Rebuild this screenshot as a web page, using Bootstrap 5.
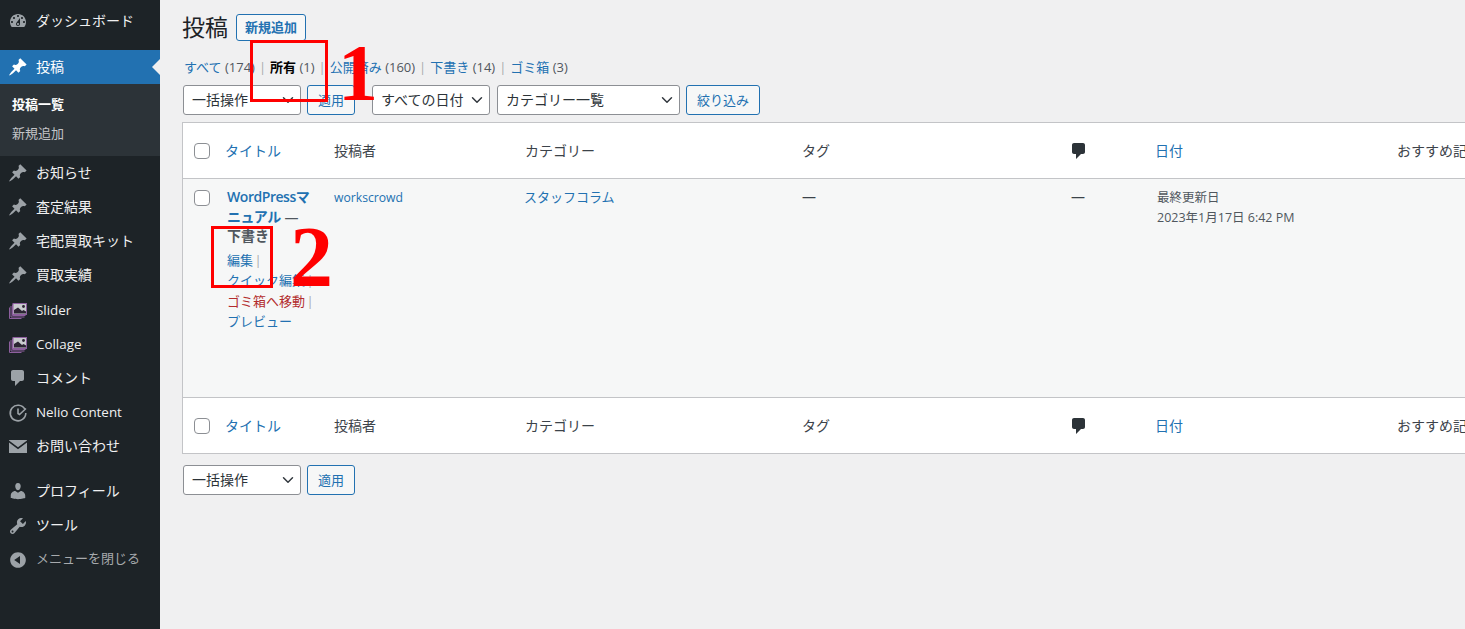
<!DOCTYPE html>
<html lang="ja">
<head>
<meta charset="utf-8">
<title>投稿</title>
<link href="https://cdn.jsdelivr.net/npm/bootstrap@5.3.0/dist/css/bootstrap.min.css" rel="stylesheet">
<style>
html,body{height:100%;overflow:hidden}
body{font-family:"Open Sans","Noto Sans CJK JP",sans-serif;font-size:13px;background:#f0f0f1;color:#3c434a;position:relative}
a{text-decoration:none;color:#2271b1}
.wp-shell{height:629px;overflow:hidden}
.wp-side{width:160px;flex:0 0 160px;background:#1d2327;padding-top:4px}
.wp-item{height:34px;color:#f0f0f1;font-size:14px;padding:0 0 2px 8px;gap:8px;position:relative}
.wp-item:hover{color:#72aee6}
.wp-item svg{width:20px;height:20px;flex:0 0 20px;fill:#9ca2a7;margin-top:2px}
.wp-item.tall{height:34.4px}
.wp-item.latin{font-size:13.4px;padding-bottom:1px}
.wp-item.latin.tall{padding-bottom:0}
.wp-sep{margin-top:12px}
.wp-sep2{margin-top:11px}
.wp-item.current{background:#2271b1;color:#fff}
.wp-item.current svg{fill:#fff}
.wp-item.current::after{content:"";position:absolute;right:0;top:9px;border:8px solid transparent;border-right-color:#f0f0f1;border-left:0}
.wp-sub{background:#2c3338;height:72px;padding-top:6px}
.wp-sub a{display:block;height:29px;line-height:29px;padding-left:12px;font-size:13px;color:#c3c4c7}
.wp-sub a.on{color:#fff;font-weight:700}
.wp-item.dim{color:#a7aaad;font-size:13px}
.wp-main{flex:1 1 auto;min-width:0;padding-left:22px;overflow:hidden}
.wp-head{height:41px;padding-top:14px;gap:8px;padding-left:1px}
.wp-title{font-size:23px;font-weight:400;line-height:26px;margin:0;color:#1d2327;margin-left:-1px}
.wp-add{border:1px solid #2271b1;color:#2271b1;background:#f6f7f7;font-size:13px;font-weight:600;border-radius:3px;padding:0 8px;height:27px;line-height:25px;width:70px;white-space:nowrap}
.wp-views{height:44px;padding:17px 0 0 2px;line-height:18px;white-space:nowrap;color:#50575e;font-size:13px}
.wp-views b{color:#000}
.wp-views i{font-style:normal;color:#a7aaad;margin:0 4px}
.wp-views em{font-style:normal;color:#50575e}
.wp-bar{height:37px;gap:6px;padding-left:1px}
.wp-sel.form-select{height:30px;font-size:14px;color:#2c3338;border:1px solid #8c8f94;border-radius:3px;padding:0 24px 0 8px;line-height:28px;background-position:right 4px center;background-color:#fff;flex:0 0 auto}
.sel-a{width:118px}.sel-b{width:118px;margin-left:11px}.sel-c{width:183px;margin-left:1px}
.wp-btn{height:30px;border:1px solid #2271b1;color:#2271b1;background:#f6f7f7;border-radius:3px;font-size:13px;padding:0;line-height:28px;text-align:center;flex:0 0 auto}
.wp-btn:hover{border-color:#135e96;color:#135e96;background:#f0f0f1}
.btn-apply{width:48px}.btn-filter{width:74px}
.wp-table.table{table-layout:fixed;width:1420px;margin:0;border:1px solid #c3c4c7;border-collapse:separate;border-spacing:0;font-size:14px;--bs-table-bg:transparent}
.wp-table th,.wp-table td{border:0;font-weight:400;padding:0 10px;vertical-align:middle;color:#3c434a;box-shadow:none}
.wp-table thead th{height:56px;background:#fff;border-bottom:1px solid #c3c4c7}
.wp-table tfoot th{height:56px;background:#fff;border-top:1px solid #c3c4c7}
.wp-table tbody td{height:218px;background:#f6f7f7;vertical-align:top;padding-top:8px;line-height:19.5px}
.wp-table th.sort{padding-left:8px}
.c-cb{width:34px}.c-title{width:107px}.c-auth{width:191px}.c-cat{width:277px}.c-tag{width:269px}.c-com{width:86px}.c-date{width:240px}.c-feat{width:216px}
.wp-table th.c-cb{padding:0 0 0 11px}
.wp-table tbody td.c-cb{padding:9px 0 0 11px}
.wp-check.form-check-input{width:16px;height:16px;margin:0;border:1px solid #8c8f94;border-radius:4px;display:block;float:none;background-color:#fff}
td.c-cb .wp-check{margin-top:2px}
.wp-post{font-weight:600;color:#2271b1;letter-spacing:-.45px}
.wp-state{font-weight:600;color:#50575e}
.wp-acts{margin-top:4px;font-size:13px;line-height:20.5px;white-space:nowrap}
.wp-acts span{display:block;color:#a7aaad;word-spacing:-2px}
.wp-acts a.del{color:#b32d2e}
.wp-small{font-size:12.2px;color:#2271b1}
.wp-catlink{font-size:13px;margin-left:-1px}
.wp-table tbody td.wp-date{font-size:12.5px;line-height:20px;color:#50575e;padding-top:9px}
.wp-cicon{width:20px;height:20px;fill:#2c3338;display:block;margin-left:-2px}
.wp-bottom{margin-top:11px;gap:6px;padding-left:1px}
.wp-mark{position:absolute;border:3px solid #f00;pointer-events:none}
.wp-mark1{left:250px;top:40px;width:78px;height:62px}
.wp-mark2{left:211px;top:226px;width:62px;height:62px}
.wp-num{position:absolute;color:#f00;font-family:"Liberation Serif",serif;font-weight:700;pointer-events:none;line-height:1}
.wp-num1{left:338px;top:33px;font-size:80px}
.wp-num2{left:290px;top:214px;font-size:86px}
</style>
</head>
<body>
<div class="d-flex wp-shell">
  <nav class="wp-side d-flex flex-column">
    <a class="wp-item d-flex align-items-center" href="#"><svg viewBox="0 0 20 20"><path fill-rule="evenodd" d="M3.76 16h12.48c1.1-1.37 1.76-3.11 1.76-5 0-4.42-3.58-8-8-8s-8 3.58-8 8c0 1.89.66 3.63 1.76 5zM10 4c.55 0 1 .45 1 1s-.45 1-1 1-1-.45-1-1 .45-1 1-1zM6 6c.55 0 1 .45 1 1s-.45 1-1 1-1-.45-1-1 .45-1 1-1zm8 0c.55 0 1 .45 1 1s-.45 1-1 1-1-.45-1-1 .45-1 1-1zm-5.37 5.55L12 7v6c0 1.1-.9 2-2 2s-2-.9-2-2c0-.57.24-1.08.63-1.45zM4 10c.55 0 1 .45 1 1s-.45 1-1 1-1-.45-1-1 .45-1 1-1zm12 0c.55 0 1 .45 1 1s-.45 1-1 1-1-.45-1-1 .45-1 1-1zm-5 3c0-.55-.45-1-1-1s-1 .45-1 1 .45 1 1 1 1-.45 1-1z"/></svg>ダッシュボード</a>
    <a class="wp-item current wp-sep d-flex align-items-center" href="#"><svg viewBox="0 0 20 20"><path d="M10.44 3.02l1.82-1.82 6.36 6.35-1.83 1.82c-1.05-.68-2.48-.57-3.41.36l-.75.75c-.92.93-1.04 2.35-.35 3.41l-1.83 1.82-2.41-2.41-2.8 2.79c-.42.42-3.38 2.71-3.8 2.29s1.86-3.39 2.28-3.81l2.79-2.79L4.1 9.36l1.83-1.82c1.05.69 2.48.57 3.4-.36l.75-.75c.93-.92 1.05-2.35.36-3.41z"/></svg>投稿</a>
    <div class="wp-sub"><a class="on" href="#">投稿一覧</a><a href="#">新規追加</a></div>
    <a class="wp-item d-flex align-items-center" href="#"><svg viewBox="0 0 20 20"><path d="M10.44 3.02l1.82-1.82 6.36 6.35-1.83 1.82c-1.05-.68-2.48-.57-3.41.36l-.75.75c-.92.93-1.04 2.35-.35 3.41l-1.83 1.82-2.41-2.41-2.8 2.79c-.42.42-3.38 2.71-3.8 2.29s1.86-3.39 2.28-3.81l2.79-2.79L4.1 9.36l1.83-1.82c1.05.69 2.48.57 3.4-.36l.75-.75c.93-.92 1.05-2.35.36-3.41z"/></svg>お知らせ</a>
    <a class="wp-item d-flex align-items-center" href="#"><svg viewBox="0 0 20 20"><path d="M10.44 3.02l1.82-1.82 6.36 6.35-1.83 1.82c-1.05-.68-2.48-.57-3.41.36l-.75.75c-.92.93-1.04 2.35-.35 3.41l-1.83 1.82-2.41-2.41-2.8 2.79c-.42.42-3.38 2.71-3.8 2.29s1.86-3.39 2.28-3.81l2.79-2.79L4.1 9.36l1.83-1.82c1.05.69 2.48.57 3.4-.36l.75-.75c.93-.92 1.05-2.35.36-3.41z"/></svg>査定結果</a>
    <a class="wp-item d-flex align-items-center" href="#"><svg viewBox="0 0 20 20"><path d="M10.44 3.02l1.82-1.82 6.36 6.35-1.83 1.82c-1.05-.68-2.48-.57-3.41.36l-.75.75c-.92.93-1.04 2.35-.35 3.41l-1.83 1.82-2.41-2.41-2.8 2.79c-.42.42-3.38 2.71-3.8 2.29s1.86-3.39 2.28-3.81l2.79-2.79L4.1 9.36l1.83-1.82c1.05.69 2.48.57 3.4-.36l.75-.75c.93-.92 1.05-2.35.36-3.41z"/></svg>宅配買取キット</a>
    <a class="wp-item tall d-flex align-items-center" href="#"><svg viewBox="0 0 20 20"><path d="M10.44 3.02l1.82-1.82 6.36 6.35-1.83 1.82c-1.05-.68-2.48-.57-3.41.36l-.75.75c-.92.93-1.04 2.35-.35 3.41l-1.83 1.82-2.41-2.41-2.8 2.79c-.42.42-3.38 2.71-3.8 2.29s1.86-3.39 2.28-3.81l2.79-2.79L4.1 9.36l1.83-1.82c1.05.69 2.48.57 3.4-.36l.75-.75c.93-.92 1.05-2.35.36-3.41z"/></svg>買取実績</a>
    <a class="wp-item tall latin d-flex align-items-center" href="#"><svg viewBox="0 0 20 20"><path d="M1.5 6.5v11h12M3 5v11h13.5M4.5 3.5v11h13" fill="none" stroke="#8d5f9e" stroke-width="1"/><rect x="5" y="2.5" width="13.5" height="11" fill="#c9cbce" stroke="#8d5f9e"/><path d="M6 12.5l0-3.5 4-2.5 4 3.5 1.5-1 2.5 1.5v2z" fill="#2c2533"/><circle cx="15.5" cy="5.5" r="1.4" fill="#2c2533"/></svg><span>Slider</span></a>
    <a class="wp-item tall latin d-flex align-items-center" href="#"><svg viewBox="0 0 20 20"><path d="M1.5 6.5v11h12M3 5v11h13.5M4.5 3.5v11h13" fill="none" stroke="#8d5f9e" stroke-width="1"/><rect x="5" y="2.5" width="13.5" height="11" fill="#c9cbce" stroke="#8d5f9e"/><path d="M6 12.5l0-3.5 4-2.5 4 3.5 1.5-1 2.5 1.5v2z" fill="#2c2533"/><circle cx="15.5" cy="5.5" r="1.4" fill="#2c2533"/></svg><span>Collage</span></a>
    <a class="wp-item d-flex align-items-center" href="#"><svg viewBox="0 0 20 20"><path d="M5 2h9c1.1 0 2 .9 2 2v7c0 1.1-.9 2-2 2h-2l-5 5v-5H5c-1.1 0-2-.9-2-2V4c0-1.1.9-2 2-2z"/></svg>コメント</a>
    <a class="wp-item latin d-flex align-items-center" href="#"><svg viewBox="0 0 20 20"><path d="M16.8 6.2A7.8 7.8 0 1 0 17.8 10" fill="none" stroke="#9ca2a7" stroke-width="1.6"/><path d="M10 5.5v5l1.5 1L18 5.5" fill="none" stroke="#9ca2a7" stroke-width="1.6"/></svg><span>Nelio Content</span></a>
    <a class="wp-item d-flex align-items-center" href="#"><svg viewBox="0 0 20 20"><path d="M1 4h18v.6l-9 6.6-9-6.6zM1 6.6l9 6.6 9-6.6V17H1z"/></svg>お問い合わせ</a>
    <a class="wp-item tall wp-sep2 d-flex align-items-center" href="#"><svg viewBox="0 0 20 20"><path d="M10 9.25c-2.27 0-2.73-3.44-2.73-3.44C7 4.02 7.82 2 9.97 2c2.16 0 2.98 2.02 2.71 3.81 0 0-.41 3.44-2.68 3.44zm0 2.57L12.72 10c2.39 0 4.52 2.33 4.52 4.53v2.49s-3.65 1.13-7.24 1.13c-3.65 0-7.24-1.13-7.24-1.13v-2.49c0-2.25 1.94-4.48 4.47-4.48z"/></svg>プロフィール</a>
    <a class="wp-item tall d-flex align-items-center" href="#"><svg viewBox="0 0 20 20"><path fill-rule="evenodd" d="M16.68 9.77c-1.34 1.34-3.3 1.67-4.95.99l-5.41 6.52c-.99.99-2.59.99-3.58 0s-.99-2.59 0-3.57l6.52-5.42c-.68-1.65-.35-3.61.99-4.95 1.28-1.28 3.12-1.62 4.72-1.06l-2.89 2.89 2.82 2.82 2.86-2.87c.53 1.58.18 3.39-1.08 4.65zM3.81 16.21c.4.39 1.04.39 1.43 0 .4-.4.4-1.04 0-1.43-.39-.4-1.03-.4-1.43 0-.39.39-.39 1.03 0 1.43z"/></svg>ツール</a>
    <a class="wp-item dim d-flex align-items-center" href="#"><svg viewBox="0 0 20 20"><path fill-rule="evenodd" d="M10 2.16c4.33 0 7.84 3.51 7.84 7.84s-3.51 7.84-7.84 7.84S2.16 14.33 2.16 10 5.71 2.16 10 2.16zm2 11.72V6.12L6.18 9.97z"/></svg>メニューを閉じる</a>
  </nav>
  <main class="wp-main">
    <div class="wp-head d-flex align-items-start">
      <h1 class="wp-title">投稿</h1>
      <a class="wp-add text-center" href="#">新規追加</a>
    </div>
    <div class="wp-views">
      <a href="#">すべて <em>(174)</em></a><i>|</i><a href="#"><b>所有</b> <em>(1)</em></a><i>|</i><a href="#">公開済み <em>(160)</em></a><i>|</i><a href="#">下書き <em>(14)</em></a><i>|</i><a href="#">ゴミ箱 <em>(3)</em></a>
    </div>
    <div class="wp-bar d-flex align-items-start">
      <select class="form-select wp-sel sel-a"><option>一括操作</option></select>
      <button class="btn wp-btn btn-apply" type="button">適用</button>
      <select class="form-select wp-sel sel-b"><option>すべての日付</option></select>
      <select class="form-select wp-sel sel-c"><option>カテゴリー一覧</option></select>
      <button class="btn wp-btn btn-filter" type="button">絞り込み</button>
    </div>
    <table class="table wp-table">
      <thead>
        <tr>
          <th class="c-cb"><input class="form-check-input wp-check" type="checkbox" aria-label="すべて選択"></th>
          <th class="c-title sort"><a href="#">タイトル</a></th>
          <th class="c-auth">投稿者</th>
          <th class="c-cat">カテゴリー</th>
          <th class="c-tag">タグ</th>
          <th class="c-com"><svg class="wp-cicon" viewBox="0 0 20 20"><path d="M5 2h9c1.1 0 2 .9 2 2v7c0 1.1-.9 2-2 2h-2l-5 5v-5H5c-1.1 0-2-.9-2-2V4c0-1.1.9-2 2-2z"/></svg></th>
          <th class="c-date sort"><a href="#">日付</a></th>
          <th class="c-feat">おすすめ記事</th>
        </tr>
      </thead>
      <tbody>
        <tr>
          <td class="c-cb"><input class="form-check-input wp-check" type="checkbox" aria-label="選択"></td>
          <td class="c-title">
            <a class="wp-post" href="#">WordPressマニュアル</a> <span class="wp-state">— 下書き</span>
            <div class="wp-acts">
              <span><a href="#">編集</a> |</span>
              <span><a href="#">クイック編集</a> |</span>
              <span><a class="del" href="#">ゴミ箱へ移動</a> |</span>
              <span><a href="#">プレビュー</a></span>
            </div>
          </td>
          <td class="c-auth"><a class="wp-small" href="#">workscrowd</a></td>
          <td class="c-cat"><a class="wp-catlink" href="#">スタッフコラム</a></td>
          <td class="c-tag">—</td>
          <td class="c-com">—</td>
          <td class="c-date wp-date">最終更新日<br>2023年1月17日 6:42 PM</td>
          <td class="c-feat"></td>
        </tr>
      </tbody>
      <tfoot>
        <tr>
          <th class="c-cb"><input class="form-check-input wp-check" type="checkbox" aria-label="すべて選択"></th>
          <th class="c-title sort"><a href="#">タイトル</a></th>
          <th class="c-auth">投稿者</th>
          <th class="c-cat">カテゴリー</th>
          <th class="c-tag">タグ</th>
          <th class="c-com"><svg class="wp-cicon" viewBox="0 0 20 20"><path d="M5 2h9c1.1 0 2 .9 2 2v7c0 1.1-.9 2-2 2h-2l-5 5v-5H5c-1.1 0-2-.9-2-2V4c0-1.1.9-2 2-2z"/></svg></th>
          <th class="c-date sort"><a href="#">日付</a></th>
          <th class="c-feat">おすすめ記事</th>
        </tr>
      </tfoot>
    </table>
    <div class="wp-bottom d-flex">
      <select class="form-select wp-sel sel-a"><option>一括操作</option></select>
      <button class="btn wp-btn btn-apply" type="button">適用</button>
    </div>
  </main>
</div>
<div class="wp-mark wp-mark1"></div>
<div class="wp-num wp-num1">1</div>
<div class="wp-mark wp-mark2"></div>
<div class="wp-num wp-num2">2</div>
<script src="https://cdn.jsdelivr.net/npm/bootstrap@5.3.0/dist/js/bootstrap.bundle.min.js"></script>
</body>
</html>
